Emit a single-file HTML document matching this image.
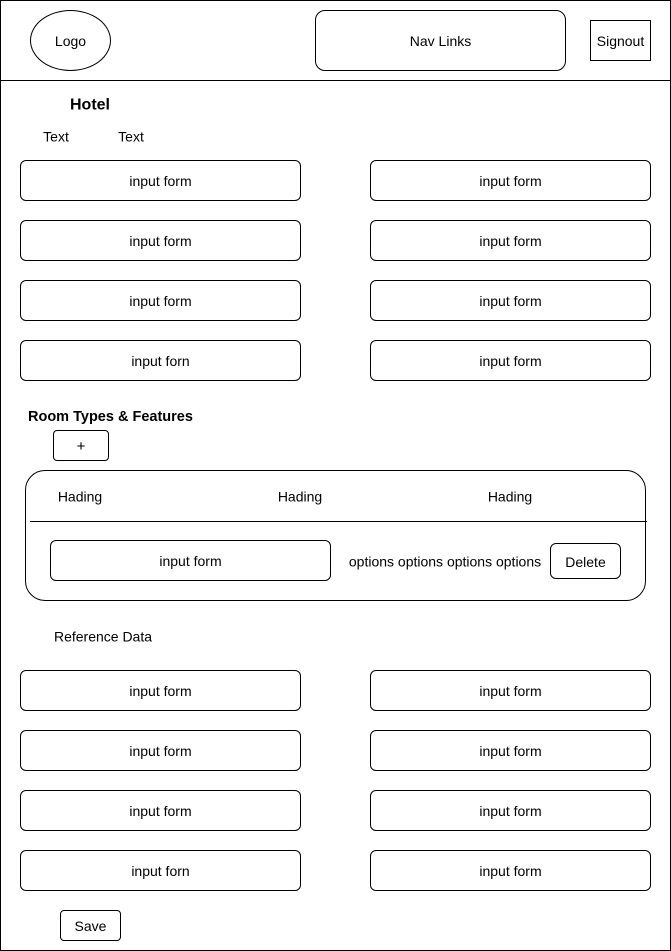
<!DOCTYPE html>
<html><head><meta charset="utf-8"><style>
*{box-sizing:border-box;margin:0;padding:0}
body{width:671px;height:951px;background:#fff;position:relative;overflow:hidden;font-family:"Liberation Sans",Arial,sans-serif;font-size:14px;color:#000}
.b{position:absolute;border:1px solid #000;display:flex;align-items:center;justify-content:center;background:#fff;padding-top:1px}
.t{position:absolute;transform:translate(-50%,-50%);white-space:nowrap;padding-top:1px}
.i{border-radius:6px;width:281px;height:41px}
</style></head><body>
<div class="b" style="left:0;top:0;width:671px;height:951px;background:none"></div>
<div style="position:absolute;left:0;top:80px;width:671px;height:1px;background:#000"></div>
<div class="b" style="left:30px;top:10px;width:81px;height:61px;border-radius:50%">Logo</div>
<div class="b" style="left:315px;top:10px;width:251px;height:61px;border-radius:10px">Nav Links</div>
<div class="b" style="left:590px;top:20px;width:61px;height:41px">Signout</div>
<div class="t" style="left:90px;top:105px;font-weight:bold;font-size:16px">Hotel</div>
<div class="t" style="left:56px;top:136px">Text</div>
<div class="t" style="left:131px;top:136px">Text</div>

<div class="b i" style="left:20px;top:160px">input form</div>
<div class="b i" style="left:370px;top:160px">input form</div>
<div class="b i" style="left:20px;top:220px">input form</div>
<div class="b i" style="left:370px;top:220px">input form</div>
<div class="b i" style="left:20px;top:280px">input form</div>
<div class="b i" style="left:370px;top:280px">input form</div>
<div class="b i" style="left:20px;top:340px">input forn</div>
<div class="b i" style="left:370px;top:340px">input form</div>

<div style="position:absolute;left:28px;top:409px;font-weight:bold;font-size:14.5px">Room Types &amp; Features</div>
<div class="b" style="left:53px;top:430px;width:56px;height:31px;border-radius:4px;font-size:15px">+</div>
<div class="b" style="left:25px;top:470px;width:621px;height:131px;border-radius:20px"></div>
<div style="position:absolute;left:30px;top:521px;width:617px;height:1px;background:#000"></div>
<div class="t" style="left:80px;top:496px">Hading</div>
<div class="t" style="left:300px;top:496px">Hading</div>
<div class="t" style="left:510px;top:496px">Hading</div>
<div class="b i" style="left:50px;top:540px">input form</div>
<div class="t" style="left:445px;top:561px">options options options options</div>
<div class="b" style="left:550px;top:543px;width:71px;height:36px;border-radius:6px">Delete</div>

<div class="t" style="left:103px;top:636px">Reference Data</div>
<div class="b i" style="left:20px;top:670px">input form</div>
<div class="b i" style="left:370px;top:670px">input form</div>
<div class="b i" style="left:20px;top:730px">input form</div>
<div class="b i" style="left:370px;top:730px">input form</div>
<div class="b i" style="left:20px;top:790px">input form</div>
<div class="b i" style="left:370px;top:790px">input form</div>
<div class="b i" style="left:20px;top:850px">input forn</div>
<div class="b i" style="left:370px;top:850px">input form</div>
<div class="b" style="left:60px;top:910px;width:61px;height:31px;border-radius:4px">Save</div>
</body></html>
